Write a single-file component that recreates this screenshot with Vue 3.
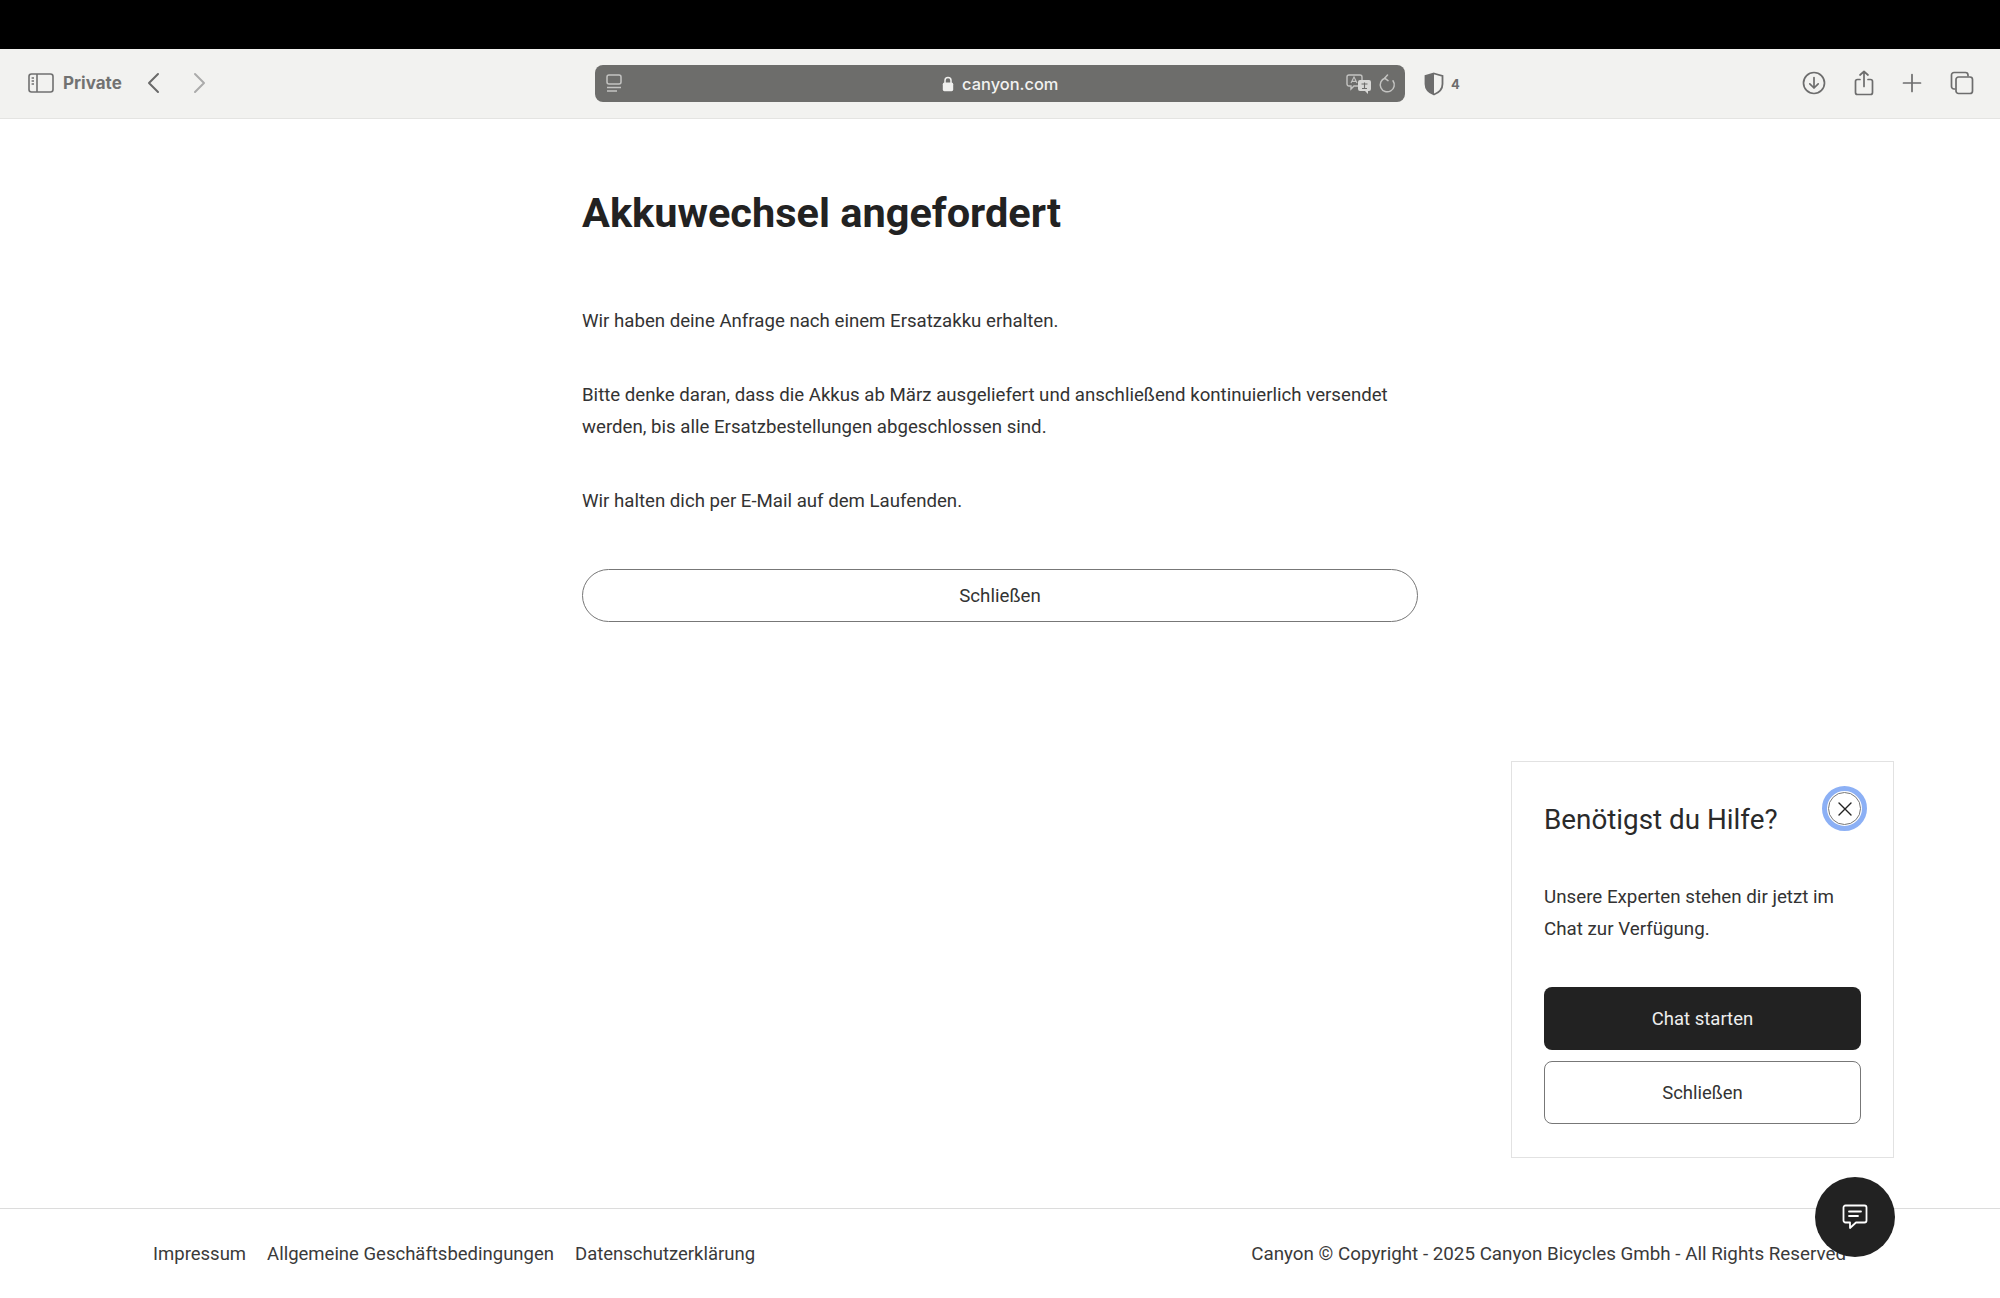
<script setup>
const links = ['Impressum', 'Allgemeine Geschäftsbedingungen', 'Datenschutzerklärung']
</script>

<template>
  <div class="page">
    <div class="topbar"></div>
    <header class="toolbar">
      <div class="tb-left">
        <svg class="sidebar-ic" width="26" height="20" viewBox="0 0 26 20" fill="none" stroke="#707070" stroke-width="1.6">
          <rect x="1" y="1" width="24" height="18" rx="2.5" />
          <path d="M9 1v18" />
          <path d="M3.6 5h2.4M3.6 8h2.4M3.6 11h2.4" stroke-width="1.3" />
        </svg>
        <span class="private">Private</span>
        <svg class="back" width="14" height="22" viewBox="0 0 14 22" fill="none" stroke="#6a6a6a" stroke-width="2" stroke-linecap="round" stroke-linejoin="round"><path d="M12 2 3 11l9 9" /></svg>
        <svg class="fwd" width="14" height="22" viewBox="0 0 14 22" fill="none" stroke="#ababab" stroke-width="2" stroke-linecap="round" stroke-linejoin="round"><path d="m2 2 9 9-9 9" /></svg>
      </div>
      <div class="tb-center">
        <div class="url">
          <svg class="reader" width="16" height="20" viewBox="0 0 16 20" fill="none" stroke="#c4c4c2" stroke-width="1.5">
            <rect x="1" y="1" width="14" height="9" rx="2" />
            <path d="M1 13.5h14M1 17h10" />
          </svg>
          <span class="address">
            <svg width="12" height="16" viewBox="0 0 12 16"><path d="M3 7V4.6a3 3 0 0 1 6 0V7" fill="none" stroke="#f0f0ee" stroke-width="1.5" /><rect x="0.8" y="6.6" width="10.4" height="8.6" rx="1.6" fill="#f0f0ee" /></svg>
            canyon.com
          </span>
          <svg class="translate" width="26" height="22" viewBox="0 0 26 22" fill="none">
            <path d="M3 2h11a2 2 0 0 1 2 2v7a2 2 0 0 1-2 2H8l-3 3v-3H3a2 2 0 0 1-2-2V4a2 2 0 0 1 2-2z" stroke="#c4c4c2" stroke-width="1.4" />
            <path d="M5 10l3-6 3 6M6 8.4h4" stroke="#c4c4c2" stroke-width="1.1" />
            <path d="M14 7h9a2 2 0 0 1 2 2v7a2 2 0 0 1-2 2h-1v3l-3-3h-5a2 2 0 0 1-2-2V9a2 2 0 0 1 2-2z" fill="#d8d8d6" />
            <path d="M15.5 11h6M18.5 9.5v6M16 15.5h5" stroke="#6d6d6b" stroke-width="1.1" />
          </svg>
          <svg class="reload" width="18" height="20" viewBox="0 0 18 20" fill="none" stroke="#c4c4c2" stroke-width="1.5" stroke-linecap="round" stroke-linejoin="round">
            <path d="M7 4.2a7 7 0 1 0 8 2.6" />
            <path d="M9.5 1 6.6 4.2l3.4 2.4" />
          </svg>
        </div>
        <div class="shield">
          <svg width="20" height="24" viewBox="0 0 20 24">
            <path d="M10 1.5 18.5 4v8c0 5-3.600 8.600-8.500 10.500C5.100 20.600 1.500 17 1.500 12V4z" fill="none" stroke="#6d6d6d" stroke-width="1.800" />
            <path d="M10 1.500 1.500 4v8c0 5 3.600 8.600 8.500 10.500z" fill="#6d6d6d" />
          </svg>
          <span>4</span>
        </div>
      </div>
      <div class="tb-right">
        <svg width="24" height="24" viewBox="0 0 24 24" fill="none" stroke="#6d6d6d" stroke-width="1.700" stroke-linecap="round" stroke-linejoin="round"><circle cx="12" cy="12" r="10.500" /><path d="M12 6.500v10.500M7.800 12.800l4.200 4.200 4.200-4.200" /></svg>
        <svg width="20" height="26" viewBox="0 0 20 26" fill="none" stroke="#6d6d6d" stroke-width="1.700" stroke-linecap="round" stroke-linejoin="round"><path d="M6 9.500H3.500a2 2 0 0 0-2 2V22.500a2 2 0 0 0 2 2h13a2 2 0 0 0 2-2V11.500a2 2 0 0 0-2-2H14" /><path d="M10 16.500V1.500M6 5l4-3.500L14 5" /></svg>
        <svg width="20" height="20" viewBox="0 0 20 20" fill="none" stroke="#6d6d6d" stroke-width="1.700" stroke-linecap="round"><path d="M10 1.500v17M1.500 10h17" /></svg>
        <svg width="24" height="24" viewBox="0 0 24 24" fill="none" stroke="#6d6d6d" stroke-width="1.700"><path d="M5.500 18H4a2.500 2.500 0 0 1-2.500-2.500V4A2.500 2.500 0 0 1 4 1.500h11.500A2.500 2.500 0 0 1 18 4v1.500" /><rect x="6" y="6" width="16.500" height="16.500" rx="2.500" /></svg>
      </div>
    </header>

    <main class="main">
      <h1>Akkuwechsel angefordert</h1>
      <p>Wir haben deine Anfrage nach einem Ersatzakku erhalten.</p>
      <p>Bitte denke daran, dass die Akkus ab März ausgeliefert und anschließend kontinuierlich versendet werden, bis alle Ersatzbestellungen abgeschlossen sind.</p>
      <p>Wir halten dich per E-Mail auf dem Laufenden.</p>
      <button class="pill">Schließen</button>
    </main>

    <footer class="footer">
      <nav class="links">
        <a v-for="l in links" :key="l">{{ l }}</a>
      </nav>
      <div class="copy">Canyon © Copyright - 2025 Canyon Bicycles Gmbh - All Rights Reserved</div>
    </footer>

    <aside class="help">
      <div class="close">
        <svg width="16" height="16" viewBox="0 0 16 16" fill="none" stroke="#222" stroke-width="1.400" stroke-linecap="round"><path d="m2 2 12 12M14 2 2 14" /></svg>
      </div>
      <h2>Benötigst du Hilfe?</h2>
      <p>Unsere Experten stehen dir jetzt im Chat zur Verfügung.</p>
      <button class="btn dark">Chat starten</button>
      <button class="btn light">Schließen</button>
    </aside>

    <div class="fab">
      <svg width="26" height="26" viewBox="0 0 26 26" fill="none" stroke="#fff" stroke-width="1.800" stroke-linejoin="round" stroke-linecap="round">
        <path d="M3.500 1.500h19a2 2 0 0 1 2 2v13a2 2 0 0 1-2 2H14l-6 5.500v-5.500H3.500a2 2 0 0 1-2-2v-13a2 2 0 0 1 2-2z" />
        <path d="M7 7.500h12M7 12h9" />
      </svg>
    </div>
  </div>
</template>

<style>
html, body { margin: 0; background: #fff; }
</style>

<style scoped>
.page {
  position: relative;
  width: 2000px;
  height: 1298px;
  overflow: hidden;
  display: flex;
  flex-direction: column;
  font-family: Roboto, "Liberation Sans", sans-serif;
  color: #222;
  background: #fff;
}
.topbar { height: 49px; background: #000; flex: none; }
.toolbar {
  flex: none;
  height: 70px;
  box-sizing: border-box;
  background: #f2f2f0;
  border-bottom: 1px solid #e4e4e2;
  position: relative;
  display: flex;
  align-items: center;
  padding: 0 26px 0 28px;
}
.tb-left { display: flex; align-items: center; width: 567px; flex: none; margin-bottom: 2px; }
.private { margin-left: 9px; font: 700 17px Inter, Roboto, sans-serif; color: #727272; }
.back { margin-left: 24px; }
.fwd { margin-left: 33px; }
.tb-center { display: flex; align-items: center; flex: none; }
.url {
  width: 810px;
  height: 37px;
  border-radius: 8px;
  background: #6d6d6b;
  display: flex;
  align-items: center;
  padding: 0 9px 0 11px;
  box-sizing: border-box;
}
.address {
  flex: 1;
  display: flex;
  align-items: center;
  justify-content: center;
  gap: 8px;
  font: 500 16.400px Inter, Roboto, sans-serif;
  color: #f2f2f0;
  padding-left: 33px;
  padding-top: 1px;
}
.reload { margin-left: 6.500px; }
.shield {
  margin-left: 19px;
  display: flex;
  align-items: center;
  gap: 7px;
  font: 700 13px Inter, Roboto, sans-serif;
  color: #6d6d6d;
}
.tb-right { margin-left: auto; display: flex; align-items: center; gap: 28px; margin-bottom: 2px; }

.main {
  flex: 1;
  width: 836px;
  margin: 0 auto;
  padding-top: 66px;
  box-sizing: border-box;
}
h1 {
  margin: 0 0 64px;
  font-size: 41.500px;
  line-height: 56px;
  font-weight: 700;
  color: #222;
}
.main p {
  margin: 0 0 42px;
  font-size: 18.650px;
  line-height: 32px;
  color: #333;
}
.pill {
  display: block;
  width: 100%;
  height: 53px;
  margin-top: 52px;
  border: 1.500px solid #777;
  border-radius: 27px;
  background: #fff;
  font: 400 18.700px Roboto, sans-serif;
  color: #333;
}
.footer {
  flex: none;
  height: 90px;
  box-sizing: border-box;
  border-top: 1px solid #dcdcdc;
  display: flex;
  align-items: center;
  justify-content: space-between;
  padding: 0 154px 0 153px;
  color: #3a3a3a;
}
.links { display: flex; gap: 21px; font-size: 18.500px; }
.copy { font-size: 18.800px; }

.help {
  position: absolute;
  left: 1511px;
  top: 761px;
  width: 383px;
  height: 397px;
  box-sizing: border-box;
  border: 1.500px solid #e2e2e2;
  background: #fff;
  padding: 32px 32px 0;
}
.help h2 {
  margin: 0 0 36px;
  padding-top: 1px;
  font-size: 27.800px;
  line-height: 50px;
  font-weight: 400;
  color: #2a2a2a;
}
.help p {
  margin: 0 0 42px;
  font-size: 18.750px;
  line-height: 32px;
  color: #333;
}
.close {
  position: absolute;
  left: 316px;
  top: 30px;
  width: 33px;
  height: 33px;
  box-sizing: border-box;
  border: 1.500px solid #777;
  border-radius: 50%;
  outline: 5.500px solid #8cb0f5;
  outline-offset: 1.500px;
  display: flex;
  align-items: center;
  justify-content: center;
}
.btn {
  display: block;
  width: 100%;
  height: 63px;
  border-radius: 8px;
  font: 400 18.500px Roboto, sans-serif;
  box-sizing: border-box;
}
.dark { background: #222; color: #eee; border: none; margin-bottom: 11px; }
.light { background: #fff; color: #333; border: 1.500px solid #777; }

.fab {
  position: absolute;
  left: 1814.500px;
  top: 1177px;
  width: 80px;
  height: 80px;
  border-radius: 50%;
  background: #222;
  display: flex;
  align-items: center;
  justify-content: center;
}
</style>
